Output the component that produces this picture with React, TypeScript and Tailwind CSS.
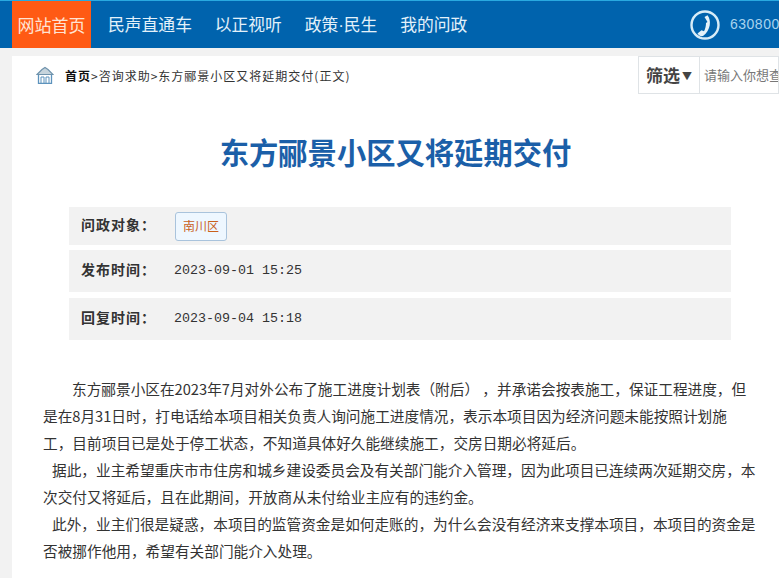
const cjk = "font-['Microsoft_YaHei','Noto_Sans_CJK_SC',sans-serif]";

function PhoneIcon() {
  return (
    <svg width="30" height="30" viewBox="0 0 30 30" fill="none">
      <circle cx="15" cy="15" r="13.500" stroke="#d7ecf7" strokeWidth="2.400" />
      <path
        d="M14.500 7 17.500 5.200C21.500 10 21 20 13 26C11 26.500 8.500 25.500 7.500 23.500L11.500 20.200 14 21.200C15.500 18.500 16 15.500 16 13L17.500 12Z"
        fill="#e4f2f9"
      />
    </svg>
  );
}

function HomeIcon() {
  return (
    <svg width="18" height="18" viewBox="0 0 18 18" fill="none">
      <path d="M1 8.500 6 3.500 9 1.500 12 3.500 17 8.500Z" fill="#c6d4dc" stroke="#6f93ac" strokeWidth="1.200" />
      <path d="M2.500 9v8.500h13V9" stroke="#5d93bd" strokeWidth="1.300" />
      <path d="M5 11h3v6.500H5zM10 11h3v6.500h-3z" stroke="#5d93bd" />
    </svg>
  );
}

function InfoRow({ label, value, className }: { label: string; value: React.ReactNode; className: string }) {
  return (
    <div className={`flex items-center bg-[#f2f2f2] pl-[12px] ${className}`}>
      <span className="w-[94px] pb-[4px] text-[14px] font-bold text-[#333] tracking-[1px]">{label}</span>
      {value}
    </div>
  );
}

export default function App() {
  return (
    <div className={`h-[578px] w-[779px] overflow-hidden bg-[#f2f2f2] ${cjk}`}>
      <div className="flex h-[48px] items-center border-t border-[#29a9e0] bg-[#0063ad]">
        <div className="ml-[12px] flex h-full w-[79px] items-center justify-center bg-[#ff5a14] text-[17px] text-[#ffe3d3]">
          网站首页
        </div>
        <div className="ml-[17px] mt-[1px] flex gap-[22.800px] text-[16.800px] text-[#e3f1fa]">
          <span>民声直通车</span>
          <span>以正视听</span>
          <span>
            政策<span className="font-['Liberation_Sans',sans-serif]">·</span>民生
          </span>
          <span>我的问政</span>
        </div>
        <div className="ml-auto flex items-center gap-[10px]">
          <PhoneIcon />
          <span className="w-[49px] overflow-hidden whitespace-nowrap text-[14px] text-[#a9d3ee] font-['Liberation_Sans',sans-serif] tracking-[0.5px]">
            63080000
          </span>
        </div>
      </div>
      <div className="ml-[12px] mt-[8px] h-[522px] bg-white">
        <div className="flex h-[38px] items-center justify-between">
          <div className="ml-[24px] flex items-center text-[12px] text-[#333]">
            <HomeIcon />
            <span className="ml-[11px] mt-[1px] whitespace-nowrap tracking-[1px]">
              <b className="text-[#111]">首页</b>&gt;咨询求助&gt;东方郦景小区又将延期交付(正文)
            </span>
          </div>
          <div className="flex h-[38px] w-[141px] overflow-hidden border border-[#dfe3e6]">
            <div className="flex w-[61px] shrink-0 items-center justify-center border-r border-[#dfe3e6] text-[17px] font-bold text-[#444]">
              筛选<span className="ml-[2px] text-[10px]">▼</span>
            </div>
            <div className="flex items-center whitespace-nowrap pl-[4px] text-[13px] text-[#777]">请输入你想查询的内容</div>
          </div>
        </div>
        <h1 className="mt-[37px] text-center text-[29.300px] leading-[40px] font-bold text-[#1b5fa8]">
          东方郦景小区又将延期交付
        </h1>
        <div className="ml-[57px] mt-[36px] flex w-[662px] flex-col">
          <InfoRow
            label="问政对象："
            className="h-[38px]"
            value={
              <span className="flex h-[29px] w-[52px] items-center justify-center rounded-[3px] border border-[#a9c3dc] bg-[#eef7ff] text-[12px] text-[#c9601c]">
                南川区
              </span>
            }
          />
          <InfoRow
            label="发布时间："
            className="mt-[5px] h-[42px]"
            value={<span className="-ml-[1px] font-['Liberation_Mono',monospace] text-[13.330px] text-[#333]">2023-09-01 15:25</span>}
          />
          <InfoRow
            label="回复时间："
            className="mt-[6px] h-[42px]"
            value={<span className="-ml-[1px] font-['Liberation_Mono',monospace] text-[13.330px] text-[#333]">2023-09-04 15:18</span>}
          />
        </div>
        <div className="ml-[31px] mt-[35px] w-[716px] text-[14.670px] leading-[27px] text-[#333] [text-spacing-trim:space-all]">
          <p className="indent-[29px]">
            东方郦景小区在2023年7月对外公布了施工进度计划表（附后） ，并承诺会按表施工，保证工程进度，但是在8月31日时，打电话给本项目相关负责人询问施工进度情况，表示本项目因为经济问题未能按照计划施
            <br />
            工，目前项目已是处于停工状态，不知道具体好久能继续施工，交房日期必将延后。
          </p>
          <p className="indent-[9px]">
            据此，业主希望重庆市市住房和城乡建设委员会及有关部门能介入管理，因为此项目已连续两次延期交房，本次交付又将延后，且在此期间，开放商从未付给业主应有的违约金。
          </p>
          <p className="indent-[9px]">
            此外，业主们很是疑惑，本项目的监管资金是如何走账的，为什么会没有经济来支撑本项目，本项目的资金是否被挪作他用，希望有关部门能介入处理。
          </p>
        </div>
      </div>
    </div>
  );
}
